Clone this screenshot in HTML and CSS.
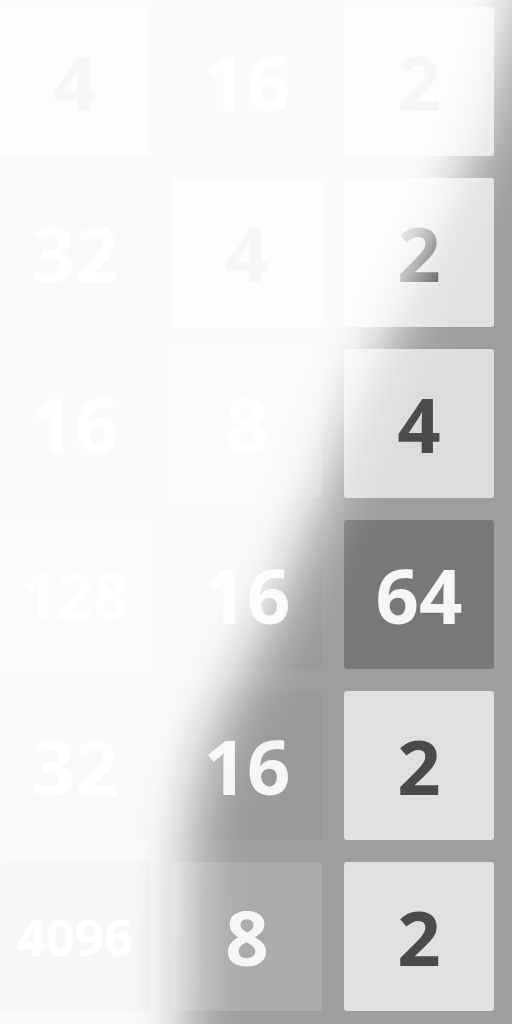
FILE: index.html
```html
<!DOCTYPE html>
<html>
<head>
<meta charset="utf-8">
<link rel="stylesheet" href="styles.css">
</head>
<body>
<div class="board">
  <div class="grid">
    <div class="tile v4">4</div>
    <div class="tile v16">16</div>
    <div class="tile v2">2</div>

    <div class="tile v32">32</div>
    <div class="tile v4">4</div>
    <div class="tile v2">2</div>

    <div class="tile v16">16</div>
    <div class="tile v8">8</div>
    <div class="tile v4">4</div>

    <div class="tile v128">128</div>
    <div class="tile v16">16</div>
    <div class="tile v64">64</div>

    <div class="tile v32">32</div>
    <div class="tile v16">16</div>
    <div class="tile v2">2</div>

    <div class="tile v4096">4096</div>
    <div class="tile v8">8</div>
    <div class="tile v2">2</div>
  </div>
  <svg class="shine" width="512" height="1024" viewBox="0 0 512 1024" aria-hidden="true">
    <defs>
      <filter id="soft" filterUnits="userSpaceOnUse" x="-300" y="-300" width="1112" height="1624">
        <feGaussianBlur stdDeviation="27"/>
      </filter>
    </defs>
    <path filter="url(#soft)" fill="#ffffff" fill-opacity="0.95"
      d="M -200 -200 L 580 -200 L 522 0 C 505 60, 480 160, 432 250 C 400 310, 362 400, 332 480 C 302 560, 272 630, 236 690 C 208 740, 194 790, 188 870 L 184 1300 L -200 1300 Z"/>
  </svg>
</div>
</body>
</html>
```

FILE: styles.css
```css
html, body {
  margin: 0;
  padding: 0;
}

body {
  width: 512px;
  height: 1024px;
  overflow: hidden;
  background: #9e9e9e;
  font-family: "Open Sans", "Liberation Sans", sans-serif;
}

.board {
  position: relative;
  width: 512px;
  height: 1024px;
  overflow: hidden;
}

.grid {
  display: grid;
  grid-template-columns: repeat(3, 150px);
  grid-auto-rows: 149px;
  column-gap: 22px;
  row-gap: 22px;
  padding-top: 7px;
}

.tile {
  display: flex;
  align-items: center;
  justify-content: center;
  border-radius: 3px;
  font-weight: 700;
  font-size: 76px;
  line-height: 1;
  color: #f6f6f6;
}

.v2 { background: #e0e0e0; color: #4a4a4a; }
.v4 { background: #dcdcdc; color: #4a4a4a; }
.v8 { background: #ababab; }
.v16 { background: #9a9a9a; }
.v32 { background: #8c8c8c; }
.v64 { background: #787878; }
.v128 { background: #b9b9b9; font-size: 63px; }
.v4096 { background: #6a6a6a; font-size: 51px; }

.shine {
  position: absolute;
  left: 0;
  top: 0;
  pointer-events: none;
}
```
